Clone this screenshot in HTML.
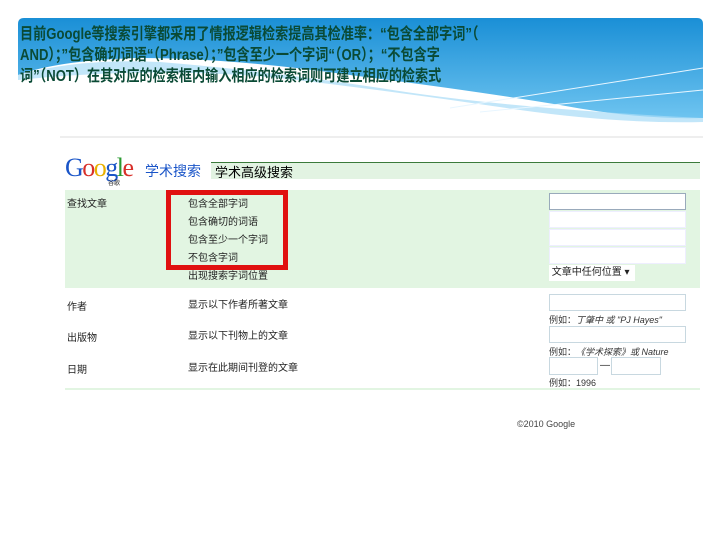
<!DOCTYPE html>
<html><head><meta charset="utf-8"><style>
body{margin:0;width:720px;height:540px;background:#fff;position:relative;overflow:hidden;font-family:"Liberation Sans","Noto Sans CJK SC",sans-serif}
.a{position:absolute}
.t{position:absolute;left:20px;top:24px;font-size:16px;font-weight:bold;color:#0a4a35;line-height:21px;white-space:nowrap;transform:scaleX(0.82);transform-origin:0 0}
.s{font-size:10px;color:#222;position:absolute;white-space:nowrap}
.in{position:absolute;background:#fff;border:1px solid #c8d8e0;height:15px}
.ex{font-size:9px;color:#333;position:absolute;white-space:nowrap}
</style></head><body>
<svg class="a" style="left:0;top:0" width="720" height="140">
<defs><linearGradient id="g" x1="0" y1="0" x2="0" y2="1"><stop offset="0" stop-color="#1a8fd6"/><stop offset="1" stop-color="#6ec4f0"/></linearGradient></defs>
<path d="M24 18 H697 Q703 18 703 24 V118 Q640 120 560 105 Q470 90 350 75 Q230 58 140 58 Q60 60 18 75 V24 Q18 18 24 18Z" fill="url(#g)"/>
<path d="M18 75 Q80 58 160 62 Q260 70 380 88 Q500 108 703 118 V122 Q620 124 520 110 Q400 92 280 78 Q150 66 18 80Z" fill="#a8dcf6" opacity="0.7"/>
<path d="M450 108 L703 68 M480 112 L703 90" stroke="#e8f6ff" stroke-width="1" fill="none"/>
<line x1="60" y1="137" x2="703" y2="137" stroke="#ddd"/>
</svg>
<div class="t">目前Google等搜索引擎都采用了情报逻辑检索提高其检准率：“包含全部字词”（<br>AND）；”包含确切词语“（Phrase）；”包含至少一个字词“（OR）；“不包含字<br>词”（NOT）在其对应的检索框内输入相应的检索词则可建立相应的检索式</div>
<div class="a" style="left:65px;top:153px;font-family:'Liberation Serif',serif;font-size:26px;letter-spacing:-1.5px"><span style="color:#1a55c8">G</span><span style="color:#d8302a">o</span><span style="color:#e8b000">o</span><span style="color:#1a55c8">g</span><span style="color:#2a9a30">l</span><span style="color:#d8302a">e</span></div>
<div class="s" style="left:108px;top:178px;font-size:6px">谷歌</div>
<div class="a" style="left:145px;top:161px;font-size:14px;color:#1a55c8">学术搜索</div>
<div class="a" style="left:211px;top:162px;width:489px;height:16px;background:#e2f3e2;border-top:1px solid #3a7a3a"></div>
<div class="a" style="left:215px;top:162px;font-size:13px;color:#000">学术高级搜索</div>
<div class="a" style="left:65px;top:190px;width:635px;height:98px;background:#e2f5e2"></div>
<div class="s" style="left:67px;top:195px">查找文章</div>
<div class="s" style="left:188px;top:195px">包含全部字词</div>
<div class="s" style="left:188px;top:213px">包含确切的词语</div>
<div class="s" style="left:188px;top:231px">包含至少一个字词</div>
<div class="s" style="left:188px;top:249px">不包含字词</div>
<div class="s" style="left:188px;top:267px">出现搜索字词位置</div>
<div class="a" style="left:166px;top:190px;width:112px;height:70px;border:5px solid #e01010"></div>
<div class="in" style="left:549px;top:193px;width:135px;border-color:#99aabb"></div>
<div class="in" style="left:549px;top:211px;width:135px;border-color:#eef"></div>
<div class="in" style="left:549px;top:229px;width:135px;border-color:#eef"></div>
<div class="in" style="left:549px;top:247px;width:135px;border-color:#eef"></div>
<div class="a" style="left:549px;top:265px;width:86px;height:16px;background:#fff;font-size:10px;line-height:16px;color:#222">&nbsp;文章中任何位置 ▾</div>
<div class="s" style="left:67px;top:298px">作者</div>
<div class="s" style="left:188px;top:296px">显示以下作者所著文章</div>
<div class="in" style="left:549px;top:294px;width:135px"></div>
<div class="ex" style="left:549px;top:313px">例如：<i>丁肇中 或 "PJ Hayes"</i></div>
<div class="s" style="left:67px;top:329px">出版物</div>
<div class="s" style="left:188px;top:327px">显示以下刊物上的文章</div>
<div class="in" style="left:549px;top:326px;width:135px"></div>
<div class="ex" style="left:549px;top:345px">例如：<i>《学术探索》或 Nature</i></div>
<div class="s" style="left:67px;top:361px">日期</div>
<div class="s" style="left:188px;top:359px">显示在此期间刊登的文章</div>
<div class="in" style="left:549px;top:357px;width:47px;height:16px"></div>
<div class="s" style="left:600px;top:360px">—</div>
<div class="in" style="left:611px;top:357px;width:48px;height:16px"></div>
<div class="ex" style="left:549px;top:376px">例如：1996</div>
<div class="a" style="left:65px;top:388px;width:635px;height:2px;background:#e2f5e2"></div>
<div class="ex" style="left:517px;top:419px;color:#444">©2010 Google</div>
</body></html>
